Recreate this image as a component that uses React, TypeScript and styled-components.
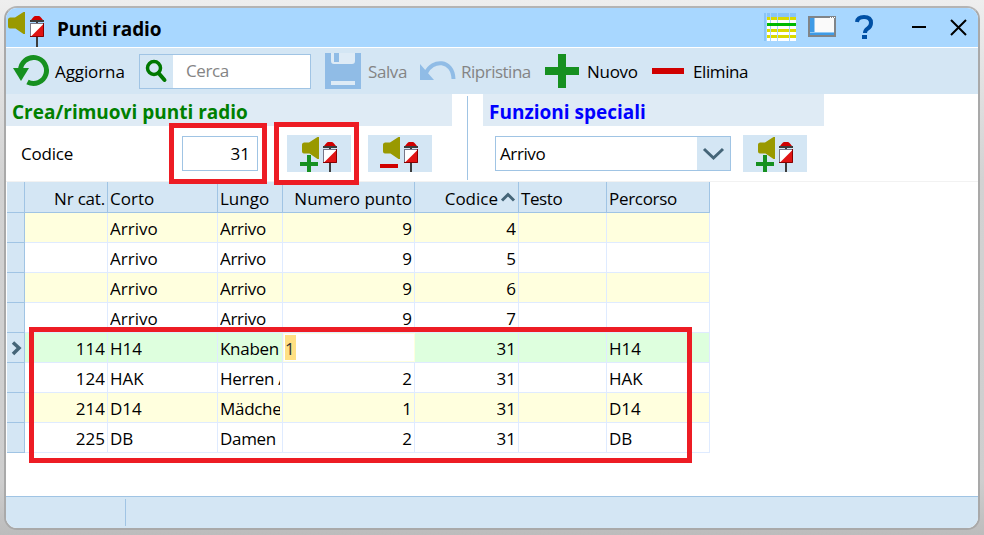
import React from 'react';
import styled, { createGlobalStyle, css } from 'styled-components';

const Global = createGlobalStyle`
  * { box-sizing: border-box; }
  html, body { margin: 0; padding: 0; overflow: hidden; }
  body {
    background: linear-gradient(to bottom, #eeeeee 0, #d2d2d2 180px, #cecece 480px, #bcbcbc 535px);
    font-family: "Open Sans", "Noto Sans", sans-serif;
    font-size: 17px;
    color: #000;
  }
  svg { display: block; flex: none; }
`;

const Desktop = styled.main`
  position: relative;
  width: 984px;
  height: 535px;
  padding: 6px 4px 5px;
`;
const Window = styled.section`
  display: flex;
  flex-direction: column;
  width: 976px;
  height: 524px;
  border: 2px solid #a9a9a9;
  border-top-color: #b4b4b4;
  border-radius: 13px;
  overflow: hidden;
  background: #fff;
`;

const TitleBar = styled.header`
  display: flex;
  align-items: flex-start;
  flex: none;
  height: 40px;
  background: #a8d7ff;
  border-bottom: 1px solid #fff;
`;
const Text = styled.span<{ $ls?: number; $muted?: boolean }>`
  white-space: pre;
  line-height: 24px;
  letter-spacing: ${p => p.$ls ?? 0}px;
  color: ${p => (p.$muted ? '#848484' : 'inherit')};
`;
const Title = styled.h1`
  flex: 1;
  margin: 9px 0 0 11px;
  font-size: 19px;
  line-height: 24px;
  font-weight: 700;
  letter-spacing: -0.1px;
`;
const TitleTools = styled.div`
  display: flex;
  align-items: flex-start;
`;

const Toolbar = styled.div`
  display: flex;
  flex: none;
  align-items: center;
  height: 46px;
  padding-left: 7px;
  background: #d4e6f4;
`;
const ToolButton = styled.button<{ $width: number; $gap: number; $muted?: boolean }>`
  display: flex;
  align-items: center;
  gap: ${p => p.$gap}px;
  width: ${p => p.$width}px;
  height: 46px;
  padding: 0;
  border: 0;
  background: none;
  font: inherit;
  color: ${p => (p.$muted ? '#848484' : '#000')};

  ${Text} {
    padding-top: 1px;
  }
`;
const Search = styled.label`
  display: flex;
  align-items: center;
  width: 172px;
  height: 35px;
  margin-right: 14px;
  border: 1px solid #a0c4e4;
  background: #fff;
`;
const SearchIcon = styled.span`
  width: 33px;
  height: 33px;
  margin-right: 13px;
  background: #d4e6f4;
`;

const Panels = styled.div`
  display: flex;
  flex: none;
  height: 88px;
  border-bottom: 1px solid #f2f2f2;
`;
const Panel = styled.section<{ $width: number }>`
  width: ${p => p.$width}px;
`;
const PanelTitle = styled.h2<{ $color: string }>`
  height: 32px;
  margin: 0;
  padding: 6px 0 0 6px;
  background: #dfebf5;
  color: ${p => p.$color};
  font-size: 19px;
  line-height: 24px;
  font-weight: 700;
`;
const PanelBody = styled.div<{ $left: number }>`
  display: flex;
  align-items: flex-start;
  padding: 9px 0 0 ${p => p.$left}px;
`;
const Divider = styled.div`
  width: 1px;
  height: 84px;
  margin: 2px 15px 0 15px;
  background: #a0c4e4;
`;
const FieldName = styled.span`
  width: 161px;
  padding-top: 7px;
  line-height: 24px;
  letter-spacing: -0.2px;
`;
const Field = styled.div<{ $width: number; $right?: boolean }>`
  display: flex;
  align-items: center;
  justify-content: ${p => (p.$right ? 'flex-end' : 'space-between')};
  width: ${p => p.$width}px;
  height: 35px;
  margin-top: 1px;
  padding: 0 ${p => (p.$right ? 7 : 0)}px 0 4px;
  border: 1px solid #a0c4e4;
  background: #fff;
`;
const DropButton = styled.span`
  width: 33px;
  height: 33px;
  background: #d4e6f4;
`;
const PointButton = styled.button<{ $gap: number }>`
  width: 64px;
  height: 37px;
  margin-left: ${p => p.$gap}px;
  padding: 0;
  border: 0;
  background: #d4e6f4;
`;

const GridArea = styled.div`
  flex: 1;
  padding-left: 1px;
`;
const columns = '18px 83px 110px 65px 132px 104px 88px 103px';
const HeaderRow = styled.div`
  display: grid;
  grid-template-columns: ${columns};
  width: 703px;
  height: 31px;
`;
const HeaderCell = styled.div<{ $right?: boolean }>`
  display: flex;
  align-items: center;
  justify-content: ${p => (p.$right ? 'flex-end' : 'flex-start')};
  padding: 4px 2px 0;
  background: #d4e6f4;
  border-right: 1px solid #a0c4e4;
  border-bottom: 1px solid #a0c4e4;
`;
type Tone = 'plain' | 'yellow' | 'green';
const tones: Record<Tone, string> = { plain: '#ffffff', yellow: '#ffffde', green: '#deffde' };
const Row = styled.div<{ $tone: Tone }>`
  display: grid;
  grid-template-columns: ${columns};
  width: 703px;
  height: 30px;
  background: ${p => tones[p.$tone]};
`;
const Marker = styled.div`
  background: #d4e6f4;
  border-right: 1px solid #a0c4e4;
  border-bottom: 1px solid #a0c4e4;
`;
const Cell = styled.div<{ $right?: boolean; $editing?: boolean }>`
  display: flex;
  align-items: center;
  justify-content: ${p => (p.$right ? 'flex-end' : 'flex-start')};
  min-width: 0;
  padding: 2px 2px 0;
  border-right: 1px solid #dfebff;
  border-bottom: 1px solid #dfebff;
  ${p =>
    p.$editing &&
    css`
      justify-content: flex-start;
      padding: 0 0 0 1px;
      border-right: 0;
      background: #fff;
      box-shadow: inset 0 0 0 1px #ffffde;
    `}
`;
const Clip = styled.span<{ $tight?: boolean }>`
  overflow: hidden;
  white-space: nowrap;
  line-height: 24px;
  letter-spacing: ${p => (p.$tight ? -0.3 : 0)}px;
`;
const Selection = styled.mark`
  width: 11px;
  height: 25px;
  margin-left: 1px;
  line-height: 27px;
  background: #ffe084;
  color: #333;
`;

const StatusBar = styled.footer`
  display: flex;
  flex: none;
  height: 32px;
  padding: 2px 0 0 119px;
  border-top: 1px solid #a0c4e4;
  background: #d4e6f4;
`;
const StatusDivider = styled.div`
  width: 1px;
  height: 27px;
  background: #a0c4e4;
`;

const Highlight = styled.div<{ $x: number; $y: number; $w: number; $h: number }>`
  position: absolute;
  left: ${p => p.$x}px;
  top: ${p => p.$y}px;
  width: ${p => p.$w}px;
  height: ${p => p.$h}px;
  border: 5px solid #ed1c24;
  pointer-events: none;
`;

const Speaker = () => <path d="M0 7.500q0-1.500 2-2h5L15.500 0H17v22h-1.500L7.500 16.500H2q-2 0-2-2z" fill="#999900" />;
const Flag = () => (
  <g>
    <path d="M1 4Q4 0 5 0h4q1 0 4 4z" fill="#d00000" />
    <path d="M0 4h14v2H8v2H6V6H0z" fill="#3c3c3c" />
    <path d="M6 20h2v11H6z" fill="#3c3c3c" />
    <rect x="0.500" y="7.500" width="13" height="13" fill="#fff" stroke="#777788" />
    <path d="M13.500 8v12.500H1z" fill="#e01414" />
    <path d="M0 20.500h13.500V7" fill="none" stroke="#880000" />
  </g>
);
const AppIcon = () => (
  <svg width="40" height="39" viewBox="0 0 40 39">
    <g transform="translate(2 4)"><Speaker /></g>
    <g transform="translate(24 8)"><Flag /></g>
  </svg>
);
const PointIcon = ({ minus }: { minus?: boolean }) => (
  <svg width="64" height="37" viewBox="0 0 64 37">
    <g transform="translate(15 2)"><Speaker /></g>
    <g transform="translate(36 7)"><Flag /></g>
    {minus ? (
      <path d="M12 29h18v4H12z" fill="#d00000" />
    ) : (
      <path d="M20 20h4v7h7v4h-7v6h-4v-6h-7v-4h7z" fill="#169020" />
    )}
  </svg>
);
const RefreshIcon = () => (
  <svg width="37" height="36" viewBox="0 0 37 36">
    <path d="M7.500 17.500A13 13 0 1 1 14.500 29" fill="none" stroke="#169020" strokeWidth="5" />
    <path d="M0 15h16L8 28z" fill="#169020" />
  </svg>
);
const SaveIcon = () => (
  <svg width="36" height="36" viewBox="0 0 36 36">
    <path d="M0 0h36v36H0z" fill="#90bce6" />
    <path d="M6 0h24v8q0 3-3 3H9q-3 0-3-3zM6 28h24v4H6z" fill="#deebf6" />
    <path d="M9 0h5v9H9z" fill="#90bce6" />
  </svg>
);
const UndoIcon = () => (
  <svg width="37" height="22" viewBox="0 0 37 22">
    <path d="M7 13C13-1 34-1 34.500 19" fill="none" stroke="#90bce6" strokeWidth="4" />
    <path d="M1 4v16h14z" fill="#90bce6" />
  </svg>
);

const ChevronDown = () => (
  <svg width="33" height="33" viewBox="0 0 33 33">
    <path d="M7 12l9.500 9 9.500-9" fill="none" stroke="#456578" strokeWidth="3" />
  </svg>
);

interface Entry {
  values: [string, string, string, string, string, string, string];
  tone: Tone;
  current?: boolean;
}
const entries: Entry[] = [
  { tone: 'yellow', values: ['', 'Arrivo', 'Arrivo', '9', '4', '', ''] },
  { tone: 'plain', values: ['', 'Arrivo', 'Arrivo', '9', '5', '', ''] },
  { tone: 'yellow', values: ['', 'Arrivo', 'Arrivo', '9', '6', '', ''] },
  { tone: 'plain', values: ['', 'Arrivo', 'Arrivo', '9', '7', '', ''] },
  { tone: 'green', current: true, values: ['114', 'H14', 'Knaben', '1', '31', '', 'H14'] },
  { tone: 'plain', values: ['124', 'HAK', 'Herren AK', '2', '31', '', 'HAK'] },
  { tone: 'yellow', values: ['214', 'D14', 'Mädchen', '1', '31', '', 'D14'] },
  { tone: 'plain', values: ['225', 'DB', 'Damen', '2', '31', '', 'DB'] },
];
const numeric = [true, false, false, true, true, false, false];

export default function App() {
  return (
    <Desktop>
      <Global />
      <Window>
        <TitleBar>
          <AppIcon />
          <Title>Punti radio</Title>
          <TitleTools>
            <svg width="214" height="39" viewBox="0 0 214 39">
              <path d="M0 5h32v28H0z" fill="#8ac4f6" />
              <path d="M3 9h29v24H3z" fill="#fff" />
              <path d="M3 9h29v3H3zM3 21h29v3H3zM3 27h29v3H3z" fill="#dada00" />
              <path d="M6.500 5v28M13.500 5v28M25.500 5v28" stroke="#a9d6fa" />
              <path d="M3 15h29v3H3z" fill="#00b900" />
              <path d="M2.500 5v28" stroke="#a8d7ff" />
              <rect x="45" y="9" width="26" height="19" fill="#fafafa" stroke="#808488" strokeWidth="2" />
              <path d="M46 10h4.500v14H46zM46 25h24v2H46z" fill="#3f9be6" />
              <path d="M46 24h24v1H46z" fill="#90c8f4" />
              <path d="M66 9.500h5" stroke="#fff" strokeDasharray="1 1" />
              <path d="M93 14Q93.500 9 100 9q7 0 7 6 0 3.500-3.500 5.700Q101 22.500 101 25" fill="none" stroke="#0050a5" strokeWidth="4" />
              <path d="M98 27h5v4h-5z" fill="#0050a5" />
              <path d="M148 19h14" stroke="#000" strokeWidth="2" />
              <path d="M187 12l15 15M202 12l-15 15" stroke="#000" strokeWidth="2" />
            </svg>
          </TitleTools>
        </TitleBar>

        <Toolbar>
          <ToolButton $width={126} $gap={5}>
            <RefreshIcon />
            <Text $ls={-0.1}>Aggiorna</Text>
          </ToolButton>
          <Search>
            <SearchIcon>
              <svg width="33" height="33" viewBox="0 0 33 33">
                <circle cx="14" cy="13" r="6.500" fill="none" stroke="#007800" strokeWidth="3.500" />
                <path d="M18.500 18l6 7" stroke="#007800" strokeWidth="4" strokeLinecap="round" />
              </svg>
            </SearchIcon>
            <Text $muted $ls={-0.4}>Cerca</Text>
          </Search>
          <ToolButton $width={94} $gap={7} $muted>
            <SaveIcon />
            <Text $ls={-0.4}>Salva</Text>
          </ToolButton>
          <ToolButton $width={126} $gap={5} $muted>
            <UndoIcon />
            <Text $ls={-0.5}>Ripristina</Text>
          </ToolButton>
          <ToolButton $width={107} $gap={8}>
            <svg width="34" height="34" viewBox="0 0 34 34">
              <path d="M13 0h8v13h13v8H21v13h-8V21H0v-8h13z" fill="#169020" />
            </svg>
            <Text $ls={-0.3}>Nuovo</Text>
          </ToolButton>
          <ToolButton $width={100} $gap={9}>
            <svg width="32" height="6" viewBox="0 0 32 6"><path d="M0 0h32v6H0z" fill="#d00000" /></svg>
            <Text $ls={-0.4}>Elimina</Text>
          </ToolButton>
        </Toolbar>

        <Panels>
          <Panel $width={446}>
            <PanelTitle $color="#008000">Crea/rimuovi punti radio</PanelTitle>
            <PanelBody $left={15}>
              <FieldName>Codice</FieldName>
              <Field $width={76} $right>31</Field>
              <PointButton $gap={29}><PointIcon /></PointButton>
              <PointButton $gap={17}><PointIcon minus /></PointButton>
            </PanelBody>
          </Panel>
          <Divider />
          <Panel $width={341}>
            <PanelTitle $color="#0000ff">Funzioni speciali</PanelTitle>
            <PanelBody $left={12}>
              <Field $width={236}>
                <Text $ls={-0.4}>Arrivo</Text>
                <DropButton><ChevronDown /></DropButton>
              </Field>
              <PointButton $gap={12}><PointIcon /></PointButton>
            </PanelBody>
          </Panel>
        </Panels>

        <GridArea>
          <HeaderRow>
            <HeaderCell />
            <HeaderCell $right><Text $ls={-0.2}>Nr cat.</Text></HeaderCell>
            <HeaderCell><Text>Corto</Text></HeaderCell>
            <HeaderCell><Text>Lungo</Text></HeaderCell>
            <HeaderCell $right><Text>Numero punto</Text></HeaderCell>
            <HeaderCell $right>
              <Text>Codice</Text>
              <svg width="18" height="20" viewBox="0 0 18 20">
                <path d="M4 11.500l6-6 6 6" fill="none" stroke="#456578" strokeWidth="3" />
              </svg>
            </HeaderCell>
            <HeaderCell><Text $ls={-0.4}>Testo</Text></HeaderCell>
            <HeaderCell><Text $ls={-0.3}>Percorso</Text></HeaderCell>
          </HeaderRow>
          {entries.map((entry, r) => (
            <Row key={r} $tone={entry.tone}>
              <Marker>
                {entry.current && (
                  <svg width="17" height="29" viewBox="0 0 17 29">
                    <path d="M6 9.500l6 5.500-6 6" fill="none" stroke="#456578" strokeWidth="3.500" />
                  </svg>
                )}
              </Marker>
              {entry.values.map((value, c) => {
                const editing = entry.current && c === 3;
                return (
                  <Cell key={c} $right={numeric[c]} $editing={editing}>
                    {editing ? <Selection>{value}</Selection> : <Clip $tight={c === 2}>{value}</Clip>}
                  </Cell>
                );
              })}
            </Row>
          ))}
        </GridArea>

        <StatusBar><StatusDivider /></StatusBar>
      </Window>
      <Highlight $x={169} $y={123} $w={98} $h={61} />
      <Highlight $x={274} $y={122} $w={85} $h={63} />
      <Highlight $x={29} $y={327} $w={663} $h={136} />
    </Desktop>
  );
}
